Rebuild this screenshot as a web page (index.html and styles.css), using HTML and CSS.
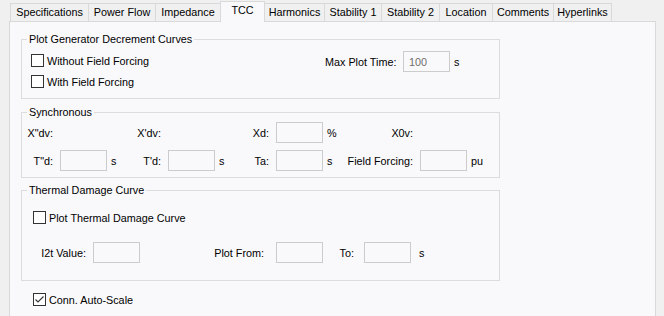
FILE: index.html
```html
<!DOCTYPE html>
<html lang="en">

<head>
    <meta charset="UTF-8">
    <meta name="viewport" content="width=device-width, initial-scale=1.0">
    <title>Generator - TCC</title>
    <link rel="stylesheet" href="styles.css">
</head>

<body>
    <!-- Tab strip -->
    <div class="tabs">
        <div class="tab t-spec">Specifications</div>
        <div class="tab t-flow">Power Flow</div>
        <div class="tab t-imp">Impedance</div>
        <div class="tab active t-tcc">TCC</div>
        <div class="tab t-harm">Harmonics</div>
        <div class="tab t-stab1">Stability 1</div>
        <div class="tab t-stab2">Stability 2</div>
        <div class="tab t-loc">Location</div>
        <div class="tab t-com">Comments</div>
        <div class="tab t-hyp">Hyperlinks</div>
    </div>

    <div class="panel">
        <!-- Decrement curves -->
        <fieldset class="group">
            <legend>Plot Generator Decrement Curves</legend>
            <div class="decrement-body">
                <div class="check-list">
                    <label class="check"><span class="box"></span>Without Field Forcing</label>
                    <label class="check"><span class="box"></span>With Field Forcing</label>
                </div>
                <div class="max-plot">
                    <span class="max-label">Max Plot Time:</span>
                    <input type="text" value="100" disabled>
                    <span class="unit">s</span>
                </div>
            </div>
        </fieldset>

        <!-- Synchronous -->
        <fieldset class="group group-sync">
            <legend>Synchronous</legend>
            <div class="sync-grid">
                <span class="lbl">X"dv:</span><span></span><span></span>
                <span class="lbl">X'dv:</span><span></span><span></span>
                <span class="lbl">Xd:</span><input type="text"><span class="unit">%</span>
                <span class="lbl">X0v:</span><span></span><span></span>

                <span class="lbl">T"d:</span><input type="text"><span class="unit">s</span>
                <span class="lbl">T'd:</span><input type="text"><span class="unit">s</span>
                <span class="lbl">Ta:</span><input type="text"><span class="unit">s</span>
                <span class="lbl">Field Forcing:</span><input type="text"><span class="unit">pu</span>
            </div>
        </fieldset>

        <!-- Thermal damage -->
        <fieldset class="group group-thermal">
            <legend>Thermal Damage Curve</legend>
            <div class="thermal-body">
                <label class="check thermal-check"><span class="box"></span>Plot Thermal Damage Curve</label>
                <div class="thermal-row">
                    <span class="lbl lbl-i2t">I2t Value:</span>
                    <input type="text">
                    <span class="lbl lbl-from">Plot From:</span>
                    <input type="text">
                    <span class="lbl lbl-to">To:</span>
                    <input type="text">
                    <span class="unit unit-wide">s</span>
                </div>
            </div>
        </fieldset>

        <label class="check conn-check">
            <span class="box">
                <svg width="11" height="11" viewBox="0 0 11 11">
                    <polyline points="1.5,5.5 4,8 9.5,2.5" fill="none" stroke="#333" stroke-width="1.1"/>
                </svg>
            </span>Conn. Auto-Scale
        </label>
    </div>
</body>

</html>
```

FILE: styles.css
```css
body {
    margin: 0;
    height: 316px;
    overflow: hidden;
    background-color: #f0f0f0;
    font-family: "Liberation Sans", Arial, sans-serif;
    font-size: 10.8px;
    color: #000;
}

/* Tabs */
.tabs {
    display: flex;
    align-items: flex-end;
    height: 21px;
    padding-left: 11px;
}

.tab {
    box-sizing: border-box;
    height: 18px;
    margin-left: -1px;
    border: 1px solid #d9d9d9;
    border-bottom: 0;
    background-color: #f0f0f0;
    line-height: 17px;
    text-align: center;
    white-space: nowrap;
}

.tab.active {
    position: relative;
    z-index: 1;
    height: 21px;
    margin-bottom: -1px;
    line-height: 16px;
    background-color: #f9f9fb;
}

.t-spec { width: 79px; }
.t-flow { width: 68px; }
.t-imp { width: 66px; }
.t-tcc { width: 45px; }
.t-harm { width: 61px; }
.t-stab1 { width: 58px; }
.t-stab2 { width: 59px; }
.t-loc { width: 54px; }
.t-com { width: 62px; }
.t-hyp { width: 59px; }

/* Panel */
.panel {
    box-sizing: border-box;
    width: 647px;
    height: 295px;
    margin-left: 9px;
    padding: 11px 0 0 11px;
    border: 1px solid #d9d9d9;
    border-bottom: 0;
    background-color: #f9f9fb;
}

.group {
    box-sizing: border-box;
    width: 479px;
    min-width: 0;
    margin: 0;
    padding: 0;
    border: 1px solid #dcdcdc;
}

.group legend {
    margin-left: 5px;
    padding: 0 2px;
    line-height: 13px;
}

.group-sync {
    margin-top: 7px;
}

.group-thermal {
    margin-top: 6px;
}

/* Checkboxes */
.check {
    display: flex;
    align-items: center;
    height: 21px;
    white-space: nowrap;
}

.box {
    box-sizing: border-box;
    display: flex;
    align-items: center;
    justify-content: center;
    width: 13px;
    height: 13px;
    margin-right: 3px;
    border: 1px solid #333;
    background-color: #fff;
}

/* Inputs */
input {
    box-sizing: border-box;
    width: 47px;
    height: 21px;
    margin: 0;
    padding: 0 5px;
    border: 1px solid #cccccc;
    background-color: #f9f9fb;
    font-family: inherit;
    font-size: 10.8px;
    color: #000;
}

input:disabled {
    color: #6d6d6d;
}

.lbl {
    box-sizing: border-box;
    padding-right: 7px;
    text-align: right;
    white-space: nowrap;
}

.unit {
    padding-left: 4px;
}

/* Decrement group */
.decrement-body {
    display: flex;
    padding: 4px 0 6px 9px;
}

.check-list {
    width: 294px;
}

.max-plot {
    display: flex;
    align-items: center;
    height: 21px;
    margin-top: 1px;
}

.max-label {
    width: 78px;
}

/* Synchronous group */
.sync-grid {
    display: grid;
    grid-template-columns: 38px 47px 18px 43px 47px 18px 43px 47px 18px 79px 47px auto;
    grid-auto-rows: 21px;
    row-gap: 7px;
    align-items: center;
    padding: 3px 0 6px;
}

/* Thermal group */
.thermal-body {
    padding: 10px 0 17px;
}

.thermal-check {
    margin-left: 11px;
}

.thermal-row {
    display: flex;
    align-items: center;
    height: 21px;
    margin-top: 14px;
}

.lbl-i2t {
    width: 71px;
}

.lbl-from {
    width: 136px;
    padding-right: 12px;
}

.lbl-to {
    width: 41px;
    padding-right: 10px;
}

.unit-wide {
    padding-left: 8px;
}

.conn-check {
    margin: 8px 0 0 12px;
}
```
